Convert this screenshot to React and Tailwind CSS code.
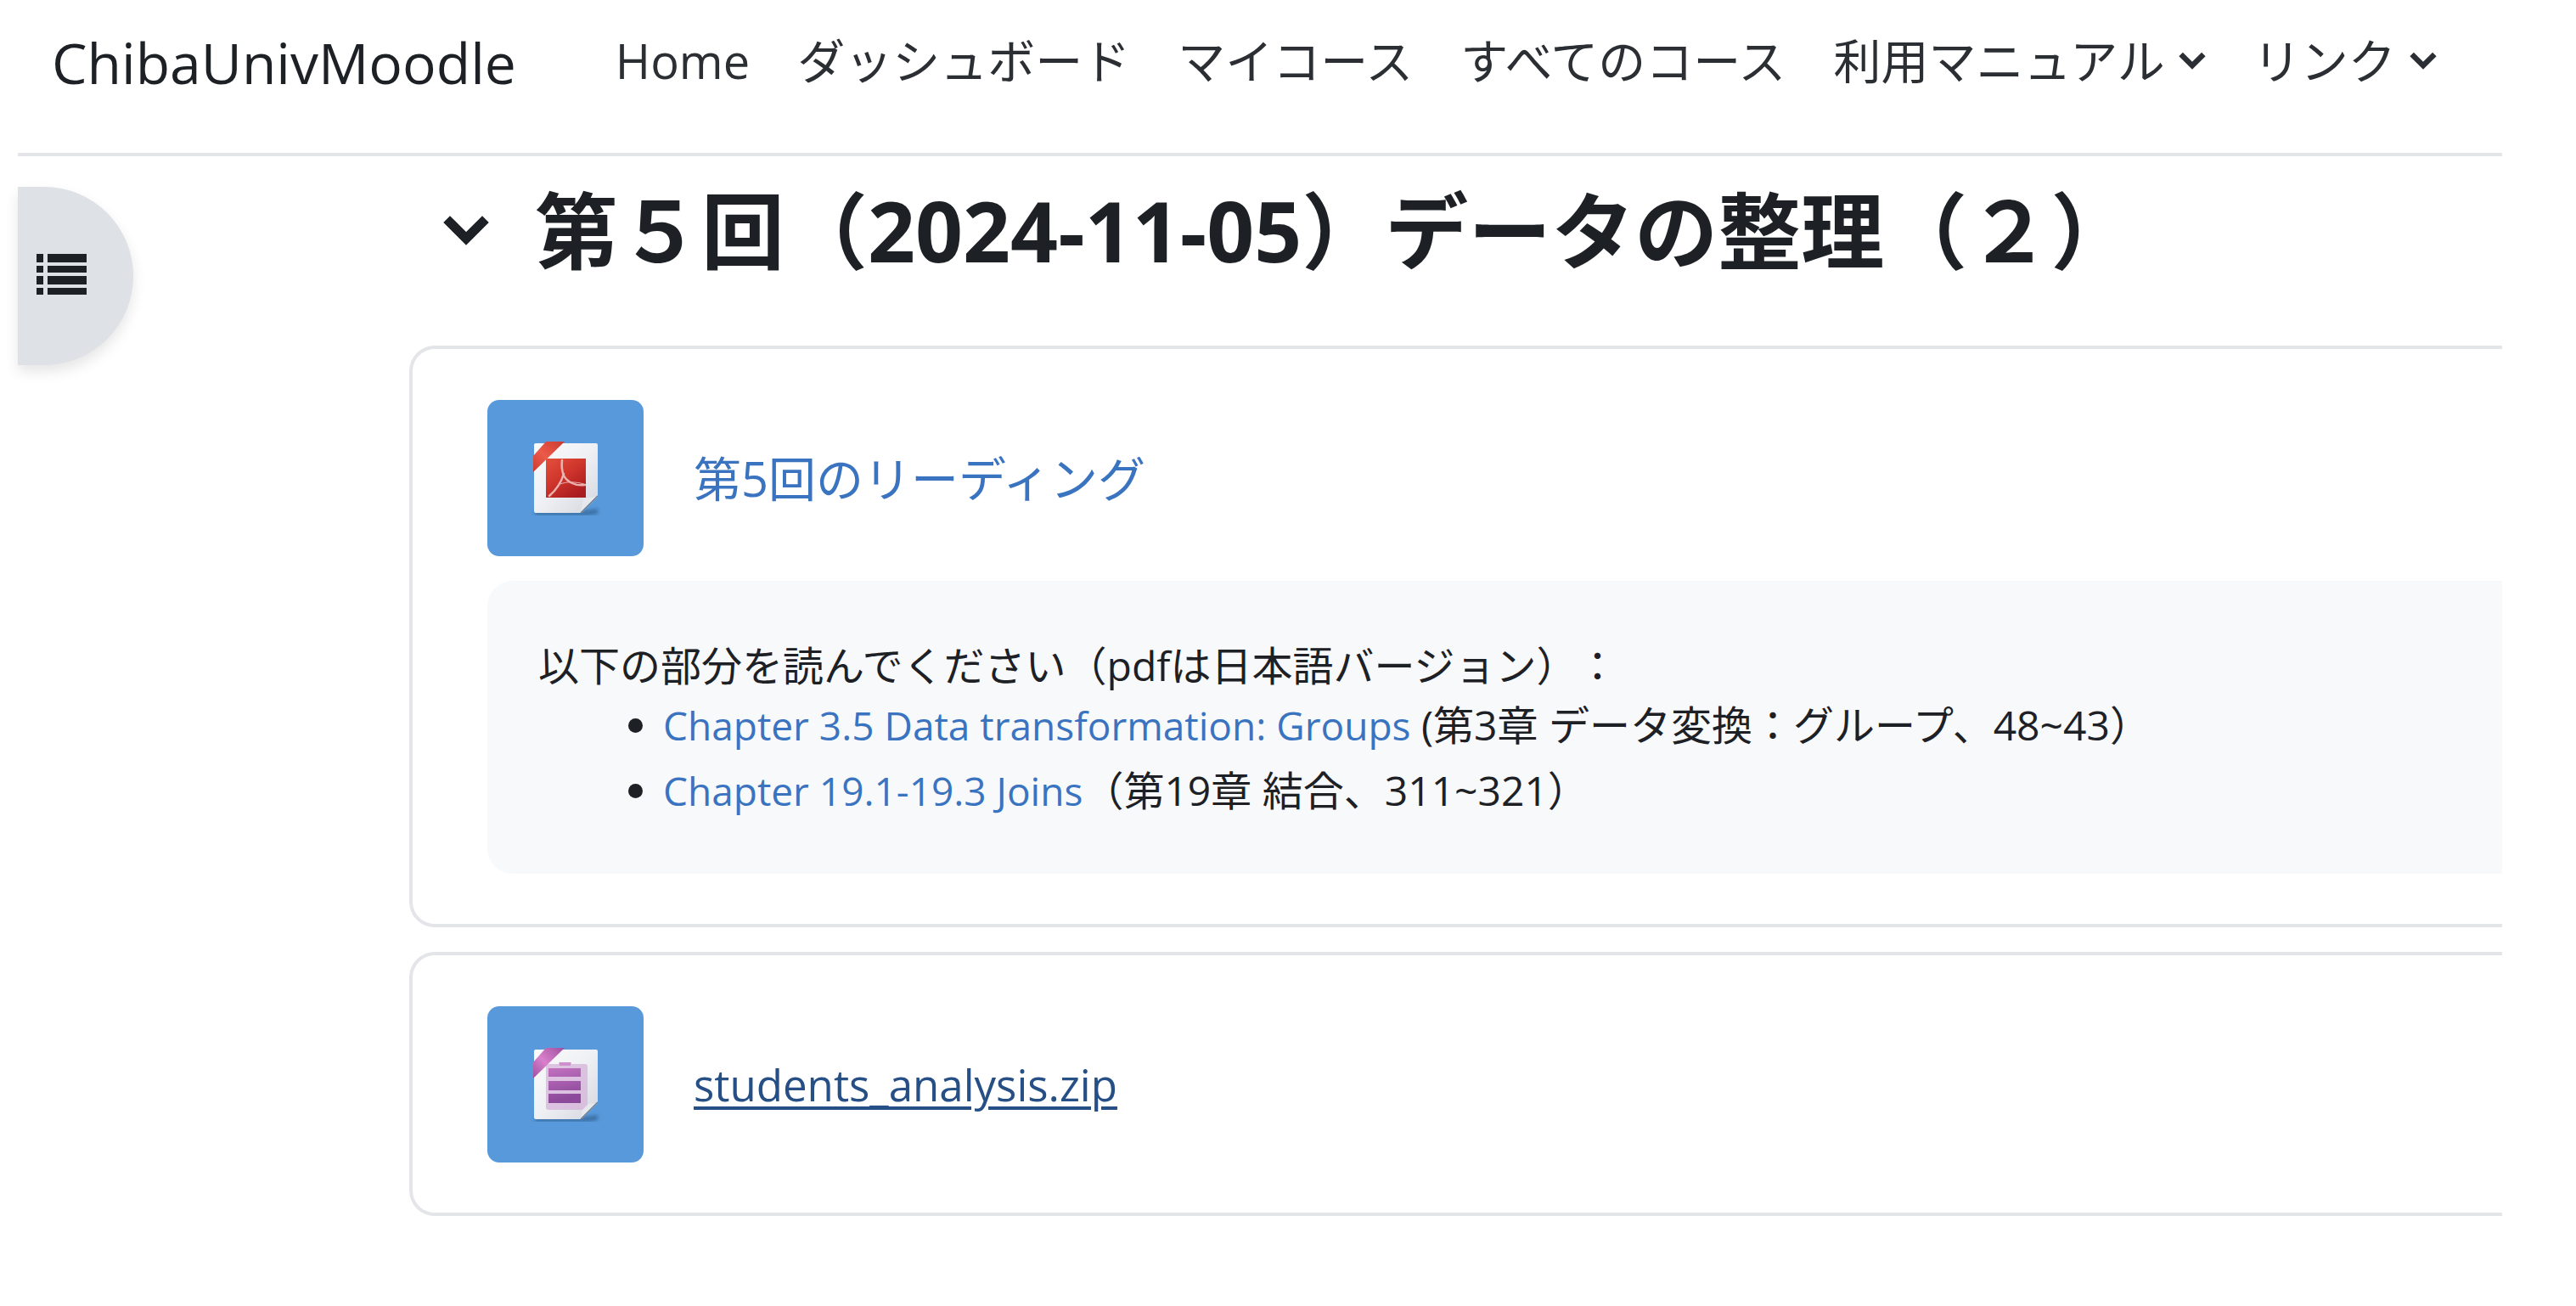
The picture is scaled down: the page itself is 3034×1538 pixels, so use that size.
import React from "react";

const FONT = "font-['Open_Sans','Noto_Sans_CJK_JP',sans-serif]";

function Chevron({ className }) {
  return (
    <svg viewBox="0 0 54 36" className={className} fill="none" stroke="currentColor" aria-hidden="true">
      <path d="M8 9 27 28 46 9" strokeWidth="11" strokeLinecap="square" />
    </svg>
  );
}

function ListIcon() {
  return (
    <svg viewBox="0 0 59 50" className="mb-[5px] h-[50px] w-[59px]" fill="currentColor" aria-hidden="true">
      <path d="M0 1h8v10H0zM13 1h46v10H13zM0 15h8v8H0zM13 15h46v8H13zM0 27h8v10H0zM13 27h46v10H13zM0 41h8v8H0zM13 41h46v8H13z" />
    </svg>
  );
}

function Sheet({ id, ribbon, children }) {
  return (
    <svg viewBox="0 0 88 88" className="size-[88px]" aria-hidden="true">
      <defs>
        <linearGradient id={`${id}-paper`} x1="0" y1="0" x2="1" y2="1">
          <stop offset="0" stopColor="#fbfbfc" />
          <stop offset="0.5" stopColor="#eff0f4" />
          <stop offset="1" stopColor="#d3d6de" />
        </linearGradient>
        <linearGradient id={`${id}-ribbon`} x1="0" y1="1" x2="1" y2="0">
          <stop offset="0" stopColor={ribbon[0]} />
          <stop offset="0.45" stopColor={ribbon[1]} />
          <stop offset="1" stopColor={ribbon[0]} />
        </linearGradient>
        <filter id={`${id}-blur`} x="-20%" y="-100%" width="140%" height="300%">
          <feGaussianBlur stdDeviation="2" />
        </filter>
      </defs>
      <path d="M7 83H62L82 80V86Q70 89 50 88H9Z" fill="#28547f" opacity="0.6" filter={`url(#${id}-blur)`} />
      <path d="M9 3H80a2 2 0 0 1 2 2V66L63 85H9a2 2 0 0 1-2-2V5a2 2 0 0 1 2-2Z" fill={`url(#${id}-paper)`} />
      <path d="M62 85 65 68 82 66Z" fill="#e6e8ed" />
      <path d="M62 85 82 65" stroke="#61788f" strokeWidth="1.5" fill="none" />
      {children}
      <path d="M21 1H43L6 37V18Z" fill={`url(#${id}-ribbon)`} />
    </svg>
  );
}

function PdfIcon() {
  return (
    <Sheet id="pdf" ribbon={["#c93a30", "#ec5a48"]}>
      <defs>
        <linearGradient id="pdf-red" x1="0" y1="0" x2="0.7" y2="1">
          <stop offset="0" stopColor="#e4503c" />
          <stop offset="0.5" stopColor="#cf352c" />
          <stop offset="1" stopColor="#a91c20" />
        </linearGradient>
      </defs>
      <rect x="21" y="21" width="47" height="46" fill="url(#pdf-red)" />
      <g fill="none" stroke="#f3c9c6" strokeLinecap="round" opacity="0.85">
        <path d="M40 23C39 31 40 36 42 41C45 47 54 54 67 52" strokeWidth="2.5" />
        <path d="M42 39C39 49 33 58 25 65" strokeWidth="2.5" />
        <path d="M38 51C45 48 55 48 66 51" strokeWidth="1" />
      </g>
    </Sheet>
  );
}

function ZipIcon() {
  return (
    <Sheet id="zip" ribbon={["#9c4f9f", "#d97fcb"]}>
      <defs>
        <linearGradient id="zip-bars" gradientUnits="userSpaceOnUse" x1="0" y1="24" x2="10" y2="68">
          <stop offset="0" stopColor="#cb77c6" />
          <stop offset="1" stopColor="#8d4a9b" />
        </linearGradient>
      </defs>
      <path d="M23 20H36V18H51V20H67a3 3 0 0 1 3 3V68L64 74H24a3 3 0 0 1-3-3V22Z" fill="#d5b3da" opacity="0.75" />
      <path d="M37 18H50V22H37Z" fill="#cf8fce" />
      <path d="M24 25H62V35H24ZM24 40H62V51H24ZM24 55H62V66H24Z" fill="url(#zip-bars)" />
    </Sheet>
  );
}

const links = ["Home", "ダッシュボード", "マイコース", "すべてのコース"];
const menus = ["利用マニュアル", "リンク"];

function Header() {
  return (
    <header className="flex items-start border-b-4 border-[#e3e5e9] pt-[29px] pb-[63px] pl-[40px]">
      <a href="#" className="mr-[117px] text-[66px] leading-[88px]">ChibaUnivMoodle</a>
      <nav className="flex items-center gap-[56px] text-[56px] leading-[84px] text-[#2b2f33]">
        {links.map((t) => (
          <a key={t} href="#">{t}</a>
        ))}
        {menus.map((t) => (
          <button key={t} type="button" className="flex items-center gap-[16px]">
            {t}
            <Chevron className="h-[21px] w-[32px]" />
          </button>
        ))}
      </nav>
    </header>
  );
}

function Activity({ icon, title, linkClass, children }) {
  return (
    <li className="rounded-l-[30px] border-4 border-r-0 border-[#e3e5e9] pt-[60px] pb-[59px] pl-[88px]">
      <div className="flex items-center gap-[59px]">
        <div className="flex size-[184px] items-center justify-center rounded-[14px] bg-[#5899db]">{icon}</div>
        <a href="#" className={`leading-[84px] ${linkClass}`}>{title}</a>
      </div>
      {children}
    </li>
  );
}

export default function App() {
  return (
    <div className={`min-h-screen overflow-hidden bg-white pr-[87px] pl-[21px] whitespace-nowrap text-[#1d2125] [text-spacing-trim:space-all] ${FONT}`}>
      <Header />
      <div className="flex items-start">
        <button
          type="button"
          aria-label="コースインデックスを開く"
          className="mt-9 flex h-[210px] w-[136px] shrink-0 items-center rounded-r-full bg-[#dee2e6] pl-[22px] shadow-[0_8px_16px_rgba(0,0,0,0.1)]"
        >
          <ListIcon />
        </button>
        <main className="min-w-0 flex-1 pl-[325px]">
          <div className="flex items-center gap-[54px] pt-[15px] pb-[64px] pl-[40px]">
            <button type="button" aria-label="折りたたむ">
              <Chevron className="h-[36px] w-[54px]" />
            </button>
            <h3 className="text-[98px] leading-[144px] font-bold">第５回（2024-11-05）データの整理（２）</h3>
          </div>
          <ul className="flex flex-col gap-[29px]">
            <Activity icon={<PdfIcon />} title="第5回のリーディング" linkClass="text-[56px] text-[#3a74c0]">
              <div className="mt-[29px] rounded-l-[30px] bg-[#f8f9fb] pt-[66px] pb-[62px] pl-[60px] text-[48px] leading-[72px]">
                <p className="leading-[68px]">以下の部分を読んでください（pdfは日本語バージョン）：</p>
                <ul className="flex list-disc flex-col gap-[5px] pl-[147px]">
                  <li>
                    <a href="#" className="text-[46px] text-[#3a74c0]">Chapter 3.5 Data transformation: Groups</a>
                    {" (第3章 データ変換：グループ、48~43）"}
                  </li>
                  <li>
                    <a href="#" className="text-[46px] text-[#3a74c0]">Chapter 19.1-19.3 Joins</a>
                    （第19章 結合、311~321）
                  </li>
                </ul>
              </div>
            </Activity>
            <Activity
              icon={<ZipIcon />}
              title="students_analysis.zip"
              linkClass="text-[51px] text-[#264f85] underline decoration-[4px] underline-offset-[6px]"
            />
          </ul>
        </main>
      </div>
    </div>
  );
}
